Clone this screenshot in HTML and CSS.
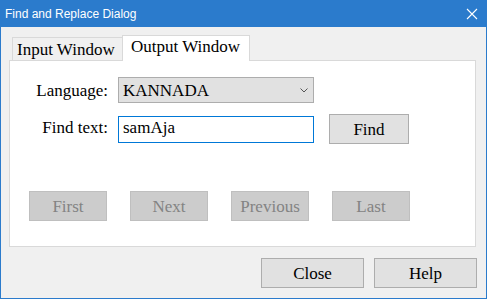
FILE: index.html
```html
<!DOCTYPE html>
<html lang="en">
<head>
    <meta charset="UTF-8">
    <title>Find and Replace Dialog</title>
    <link rel="stylesheet" href="styles.css">
</head>
<body>
    <div class="window">
        <div class="titlebar">
            <span class="title">Find and Replace Dialog</span>
            <svg class="close-x" width="12" height="12" viewBox="0 0 12 12">
                <path d="M1 1 L11 11 M11 1 L1 11" stroke="#fff" stroke-width="1.1" fill="none"/>
            </svg>
        </div>
        <div class="content">
            <div class="tabs">
                <div class="tab">Input Window</div>
                <div class="tab active">Output Window</div>
            </div>
            <div class="panel">
                <div class="form">
                    <div class="lbl">Language:</div>
                    <div class="select">
                        <span class="select-text">KANNADA</span>
                        <svg width="8" height="5" viewBox="0 0 8 5">
                            <path d="M0.5 0.5 L4 4 L7.5 0.5" stroke="#555" stroke-width="1" fill="none"/>
                        </svg>
                    </div>
                    <div></div>

                    <div class="lbl lbl-find">Find text:</div>
                    <input class="textbox" type="text" value="samAja">
                    <button class="btn">Find</button>
                </div>
                <div class="nav">
                    <button class="btn nav-btn" disabled>First</button>
                    <button class="btn nav-btn" disabled>Next</button>
                    <button class="btn nav-btn" disabled>Previous</button>
                    <button class="btn nav-btn" disabled>Last</button>
                </div>
            </div>
            <div class="footer">
                <button class="btn foot-btn">Close</button>
                <button class="btn foot-btn">Help</button>
            </div>
        </div>
    </div>
</body>
</html>
```

FILE: styles.css
```css
*{
    margin: 0;
    padding: 0;
    box-sizing: border-box;
}
body{
    font-family: "Liberation Serif", "Times New Roman", serif;
    font-size: 17px;
    color: #000;
}
.window{
    width: 487px;
    height: 299px;
    border: 1px solid #2b7bcc;
    border-top: none;
    background-color: #f0f0f0;
    display: flex;
    flex-direction: column;
}
.titlebar{
    height: 27px;
    background-color: #2b7bcc;
    display: flex;
    align-items: center;
    justify-content: space-between;
    padding: 0 8px 0 4px;
}
.title{
    font-family: "Liberation Sans", Arial, sans-serif;
    font-size: 12px;
    line-height: 26px;
    color: #fff;
}
.close-x{
    margin-top: 1px;
}
.content{
    padding-top: 8px;
}
.tabs{
    display: flex;
    align-items: flex-end;
    margin-left: 11px;
    height: 26px;
}
.tab{
    width: 111px;
    height: 24px;
    border: 1px solid #d9d9d9;
    border-bottom: none;
    padding: 2px 0 0 4px;
    font-family: "Liberation Serif", "Times New Roman", serif;
    line-height: 19px;
    white-space: nowrap;
}
.tab.active{
    width: 128px;
    height: 26px;
    margin-left: -1px;
    padding: 1px 0 0 8px;
    background-color: #fff;
    position: relative;
    z-index: 1;
}
.panel{
    margin: -1px 0 0 8px;
    width: 467px;
    height: 187px;
    background-color: #fff;
    border: 1px solid #d9d9d9;
    padding-top: 16px;
}
.form{
    display: grid;
    grid-template-columns: 98px 196px 85px;
    grid-template-rows: 26px 30px;
    column-gap: 10px;
    row-gap: 11px;
    align-items: center;
}
.form .btn{
    margin-left: 5px;
    width: 80px;
}
.lbl{
    font-family: "Liberation Serif", "Times New Roman", serif;
    font-size: 17px;
    text-align: right;
    line-height: 19px;
}
.lbl-find{
    align-self: start;
    margin-top: 4px;
}
.select{
    height: 26px;
    background-color: #e1e1e1;
    border: 1px solid #adadad;
    display: flex;
    align-items: center;
    justify-content: space-between;
    padding: 0 5px 0 4px;
}
.select-text{
    font-family: "Liberation Serif", "Times New Roman", serif;
    font-size: 17px;
    line-height: 19px;
}
.textbox{
    align-self: start;
    margin-top: 2px;
    height: 27px;
    width: 196px;
    border: 1px solid #0078d7;
    padding: 0 4px 4px 4px;
    font-family: "Liberation Serif", "Times New Roman", serif;
    font-size: 17px;
    line-height: 19px;
    outline: none;
    color: #000;
}
.btn{
    font-family: "Liberation Serif", "Times New Roman", serif;
    font-size: 17px;
    line-height: 19px;
    color: #000;
    background-color: #e1e1e1;
    border: 1px solid #adadad;
    height: 30px;
}
.nav{
    display: flex;
    gap: 23px;
    margin: 47px 0 0 19px;
}
.nav-btn{
    width: 78px;
    background-color: #cccccc;
    border-color: #bfbfbf;
    color: #838383;
}
.footer{
    display: flex;
    justify-content: flex-end;
    gap: 10px;
    margin: 11px 9px 0 0;
}
.foot-btn{
    width: 103px;
}
```
